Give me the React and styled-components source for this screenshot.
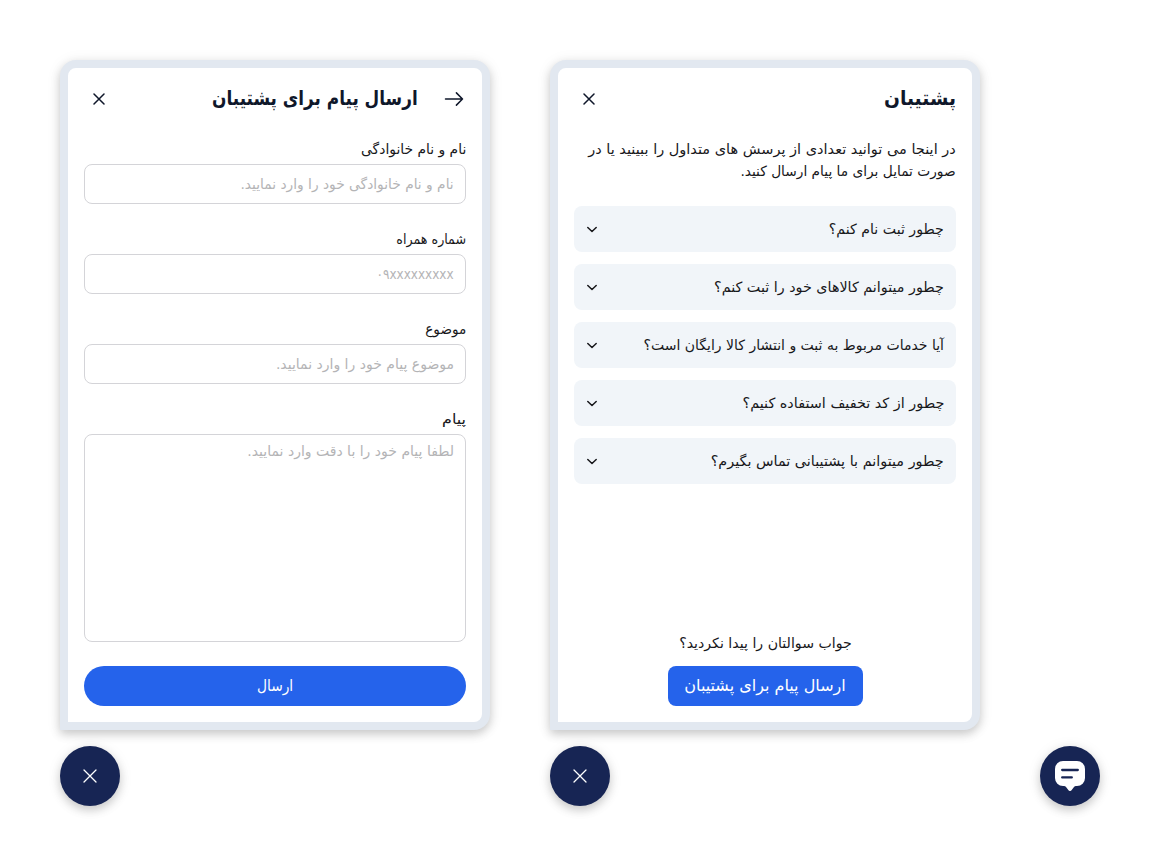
import React from "react";
import styled, { createGlobalStyle } from "styled-components";

const Global = createGlobalStyle`
  * { box-sizing: border-box; }
  body { margin: 0; background: #fff; color: #18181b; font-family: "DejaVu Sans", sans-serif; }
  button, input, textarea { font: inherit; }
`;
const Stage = styled.main`
  display: flex; align-items: flex-end; gap: 60px;
  width: 1160px; height: 866px; padding: 60px;
`;
const Widget = styled.section`
  display: flex; flex-direction: column; align-items: flex-start; gap: 16px;
`;
const Panel = styled.div`
  width: 430px; height: 670px; padding: 16px;
  display: flex; flex-direction: column; gap: 24px;
  direction: rtl; background: #fff; border: 8px solid #e2e8f0;
  border-radius: 16px 16px 16px 0;
  box-shadow: 0 4px 10px rgba(0, 0, 0, 0.18), 0 2px 16px rgba(0, 0, 0, 0.07);
`;
const Header = styled.header`
  display: flex; align-items: center; height: 30px; color: #0f172a;
`;
const IconButton = styled.button`
  display: grid; place-items: center; padding: 0; border: 0; background: none; color: inherit;
  width: ${(p) => p.$size}px; height: ${(p) => p.$size}px;
  margin-inline-start: ${(p) => (p.$end ? "auto" : "0")};
  margin-inline-end: ${(p) => (p.$end ? "0" : "24px")};
`;
const Label = styled.span`
  display: inline-block; white-space: nowrap;
  transform: scaleX(${(p) => p.$x || 1});
  transform-origin: ${(p) => (p.$center ? "center" : "right")};
`;
const Title = styled.h1`
  margin: 0; font-size: 20px; line-height: 28px; height: 30px; font-weight: 700;
`;
const Field = styled.label`
  display: flex; flex-direction: column; gap: 4px; font-size: 14px; line-height: 22px;
  flex: ${(p) => (p.$grow ? "1" : "none")};
`;
const Box = styled.span`
  display: block; border: 1px solid #d4d4d8; border-radius: 8px; color: #b4b4b6;
  flex: ${(p) => (p.$grow ? "1" : "none")};
  height: ${(p) => (p.$grow ? "auto" : "40px")};
  padding: ${(p) => (p.$grow ? "5px" : "8px")} 11px;
`;
const Button = styled.button`
  height: 40px; padding: 0; border: 0; background: #2563eb; color: #fff;
  font-size: 16px; line-height: 38px; flex: none;
  width: ${(p) => (p.$pill ? "100%" : "195px")};
  border-radius: ${(p) => (p.$pill ? "20px" : "8px")};
`;
const Intro = styled.p`
  margin: 0; font-size: 14px; line-height: 22px; display: flex; flex-direction: column; align-items: flex-start;
`;
const Faq = styled.div`
  display: flex; flex-direction: column; gap: 12px;
`;
const Question = styled.div`
  height: 46px; padding: 0 12px; display: flex; align-items: center; justify-content: space-between;
  border-radius: 8px; background: #f1f5f9; font-size: 14px; line-height: 22px;
`;
const Footer = styled.footer`
  margin-top: auto; display: flex; flex-direction: column; align-items: center; gap: 12px;
  font-size: 14px; line-height: 22px;
`;
const Launcher = styled.button`
  width: 60px; height: 60px; padding: 0; border: 0; border-radius: 50%;
  display: grid; place-items: center; background: #172554; color: #fff;
  box-shadow: 0 4px 10px rgba(0, 0, 0, 0.18), 0 2px 16px rgba(0, 0, 0, 0.07);
`;

const Cross = ({ size = 12, w = 1.5 }) => (
  <svg width={size} height={size} viewBox={`0 0 ${size} ${size}`} fill="none" stroke="currentColor" strokeWidth={w} strokeLinecap="round">
    <path d={`M1 1 ${size - 1} ${size - 1}M${size - 1} 1 1 ${size - 1}`} />
  </svg>
);
const Arrow = () => (
  <svg width="24" height="24" viewBox="0 0 24 24" fill="none" stroke="currentColor" strokeWidth="1.5" strokeLinecap="round" strokeLinejoin="round">
    <path d="M3.5 12h17M14.4 5.9 20.5 12l-6.1 6.1" />
  </svg>
);
const Chevron = () => (
  <svg width="12" height="12" viewBox="0 0 12 12" fill="none" stroke="currentColor" strokeWidth="1.5" strokeLinecap="round" strokeLinejoin="round">
    <path d="M1.8 4.5 6 8.5l4.2-4" />
  </svg>
);
const Chat = () => (
  <svg width="30" height="30" viewBox="0 0 30 30">
    <path fill="#fff" d="M8 0h14a8 8 0 0 1 8 8v9a8 8 0 0 1-8 8h-1c-.9 0-1.5.3-2 1l-2.5 3.2c-.8 1.1-2.2 1.1-3 0L11 26c-.5-.7-1.1-1-2-1H8a8 8 0 0 1-8-8V8a8 8 0 0 1 8-8Z" />
    <path fill="none" stroke="#172554" strokeWidth="2.3" strokeLinecap="round" d="M7.2 9h15.6M7.2 16.4h9.6" />
  </svg>
);

const fields = [
  ["نام و نام خانوادگی", 0.99, "نام و نام خانوادگی خود را وارد نمایید.", 0.984],
  ["شماره همراه", 0.905, "۰۹xxxxxxxxx", 0.86],
  ["موضوع", 0.97, "موضوع پیام خود را وارد نمایید.", 1],
  ["پیام", 1.14, "لطفا پیام خود را با دقت وارد نمایید.", 1],
];
const questions = [
  ["چطور ثبت نام کنم؟", 1.01],
  ["چطور میتوانم کالاهای خود را ثبت کنم؟", 1.022],
  ["آیا خدمات مربوط به ثبت و انتشار کالا رایگان است؟", 1],
  ["چطور از کد تخفیف استفاده کنیم؟", 1.028],
  ["چطور میتوانم با پشتیبانی تماس بگیرم؟", 1.028],
];

export default function App() {
  return (
    <Stage>
      <Global />
      <Widget>
        <Panel>
          <Header>
            <IconButton $size={24}><Arrow /></IconButton>
            <Title><Label $x={0.844}>ارسال پیام برای پشتیبان</Label></Title>
            <IconButton $size={30} $end><Cross /></IconButton>
          </Header>
          {fields.map(([name, nameScale, hint, hintScale], i) => (
            <Field key={name} $grow={i === 3}>
              <span><Label $x={nameScale}>{name}</Label></span>
              <Box $grow={i === 3}><Label $x={hintScale}>{hint}</Label></Box>
            </Field>
          ))}
          <Button $pill><Label $center $x={0.86}>ارسال</Label></Button>
        </Panel>
        <Launcher><Cross size={14} w={1.3} /></Launcher>
      </Widget>
      <Widget>
        <Panel>
          <Header>
            <Title><Label $x={0.935}>پشتیبان</Label></Title>
            <IconButton $size={30} $end><Cross /></IconButton>
          </Header>
          <Intro>
            <Label $x={1.036}>در اینجا می توانید تعدادی از پرسش های متداول را ببینید یا در</Label>
            <Label $x={0.98}>صورت تمایل برای ما پیام ارسال کنید.</Label>
          </Intro>
          <Faq>
            {questions.map(([q, x]) => (
              <Question key={q}><Label $x={x}>{q}</Label><Chevron /></Question>
            ))}
          </Faq>
          <Footer>
            <Label $center $x={1.01}>جواب سوالتان را پیدا نکردید؟</Label>
            <Button><Label $center>ارسال پیام برای پشتیبان</Label></Button>
          </Footer>
        </Panel>
        <Launcher><Cross size={14} w={1.3} /></Launcher>
      </Widget>
      <Launcher><Chat /></Launcher>
    </Stage>
  );
}
